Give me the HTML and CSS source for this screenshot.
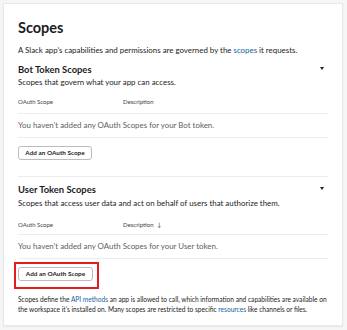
FILE: index.html
```html
<!DOCTYPE html>
<html>
<head>
<meta charset="utf-8">
<link rel="stylesheet" href="styles.css">
</head>
<body>
<div class="card">
  <h1 class="title">Scopes</h1>
  <p class="intro">A Slack app’s capabilities and permissions are governed by the <a class="link">scopes</a> it requests.</p>

  <section class="section">
    <div class="sec-head">
      <div>
        <h2 class="sec-title">Bot Token Scopes</h2>
        <p class="sec-sub">Scopes that govern what your app can access.</p>
      </div>
      <span class="caret"></span>
    </div>
    <div class="thead">
      <span class="col1">OAuth Scope</span>
      <span class="col2">Description</span>
    </div>
    <div class="empty">You haven’t added any OAuth Scopes for your Bot token.</div>
    <div class="btn-wrap"><button class="btn">Add an OAuth Scope</button></div>
  </section>

  <section class="section user">
    <div class="sec-head">
      <div>
        <h2 class="sec-title">User Token Scopes</h2>
        <p class="sec-sub">Scopes that access user data and act on behalf of users that authorize them.</p>
      </div>
      <span class="caret"></span>
    </div>
    <div class="thead">
      <span class="col1">OAuth Scope</span>
      <span class="col2">Description <span class="arrow">↓</span></span>
    </div>
    <div class="empty">You haven’t added any OAuth Scopes for your User token.</div>
    <div class="highlight"><button class="btn">Add an OAuth Scope</button></div>
  </section>

  <p class="footer">Scopes define the <a class="link">API methods</a> an app is allowed to call, which information and capabilities are available on the workspace it’s installed on. Many scopes are restricted to specific <a class="link">resources</a> like channels or files.</p>
</div>
</body>
</html>
```

FILE: styles.css
```css
* { box-sizing: border-box; }
body {
  margin: 0;
  background: #f6f6f6;
  font-family: Lato, "Noto Sans", sans-serif;
  color: #1d1c1d;
}
.card {
  margin: 3px;
  width: 340px;
  height: 323px;
  background: #fff;
  border: 1px solid #e8e8e8;
  box-shadow: 0 1px 2px rgba(0,0,0,0.06);
  padding: 14px 14px 12px 14px;
}
.title {
  margin: 0;
  font-size: 14.5px;
  font-weight: 700;
  line-height: 20px;
}
.intro {
  margin: 6px 0 0;
  font-size: 7.9px;
  line-height: 12px;
}
.link { color: #1264a3; text-decoration: none; }
.section { margin-top: 8px; }
.sec-head {
  display: flex;
  justify-content: space-between;
  align-items: flex-start;
}
.sec-title {
  margin: 0;
  font-size: 9.4px;
  font-weight: 700;
  line-height: 12px;
}
.sec-sub {
  margin: 0;
  font-size: 7.9px;
  line-height: 12px;
}
.caret {
  width: 0;
  height: 0;
  border-left: 2.5px solid transparent;
  border-right: 2.5px solid transparent;
  border-top: 3.5px solid #1d1c1d;
  margin: 3px 4px 0 0;
}
.thead {
  display: flex;
  margin-top: 9px;
  padding-bottom: 6px;
  border-bottom: 1px solid #ececec;
  font-size: 6px;
  line-height: 10px;
  color: #454245;
}
.col1 { width: 105px; }
.arrow { font-size: 6px; margin-left: 2px; }
.empty {
  padding: 5px 0 6px;
  border-bottom: 1px solid #ececec;
  font-size: 7.9px;
  line-height: 12px;
  color: #616061;
}
.btn-wrap {
  padding: 8px 0 16px;
  border-bottom: 1px solid #ececec;
}
.btn {
  display: block;
  height: 14px;
  padding: 0 6px;
  background: #fff;
  border: 1px solid #bcbcbc;
  border-radius: 3px;
  font-family: Lato, "Noto Sans", sans-serif;
  font-size: 6.4px;
  font-weight: 700;
  color: #1d1c1d;
  line-height: 12px;
}
.section.user { margin-top: 7px; }
.user .sec-sub { margin-top: 1px; }
.user .thead { margin-top: 11px; padding-bottom: 4px; }
.highlight {
  display: inline-block;
  margin: 3px 0 0 -4px;
  padding: 3px 4px 6px 2px;
  border: 2px solid #e01e1e;
}
.highlight .btn { width: 75px; }
.btn-wrap .btn { width: 74px; }
.footer {
  margin: 5px 0 0;
  font-size: 6.6px;
  line-height: 10px;
}
```
